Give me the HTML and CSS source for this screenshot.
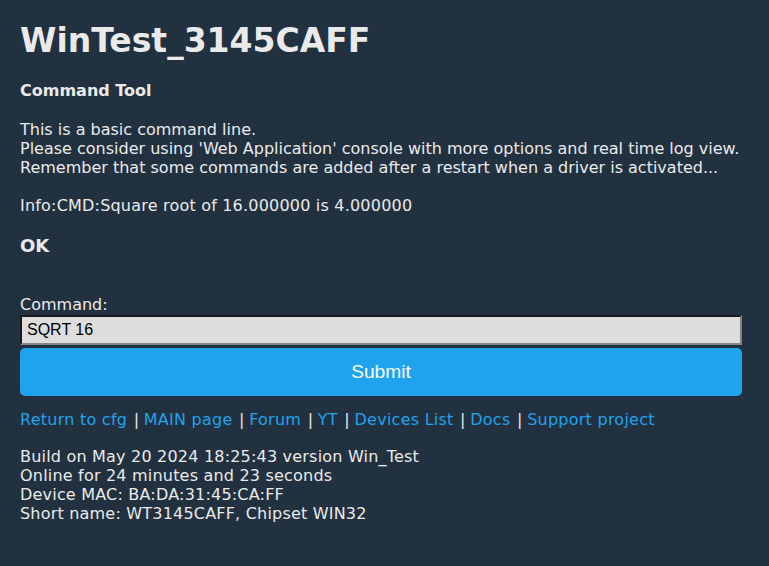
FILE: index.html
```html
<!DOCTYPE html>
<html>
<head>
<meta charset="utf-8">
<title>WinTest_3145CAFF</title>
<link rel="stylesheet" href="styles.css">
</head>
<body>
<div class="page">
  <h1 class="title">WinTest_3145CAFF</h1>
  <h4 class="subtitle">Command Tool</h4>
  <p class="intro">This is a basic command line.<br>Please consider using 'Web Application' console with more options and real time log view.<br>Remember that some commands are added after a restart when a driver is activated...</p>
  <p class="info">Info:CMD:Square root of 16.000000 is 4.000000</p>
  <h3 class="result">OK</h3>
  <form class="cmd-form">
    <label class="cmd-label" for="cmd">Command:</label>
    <input class="cmd-input" id="cmd" type="text" value="SQRT 16">
    <button class="cmd-submit" type="button">Submit</button>
  </form>
  <nav class="links"><a href="#">Return to cfg</a><span class="sep">|</span><a href="#">MAIN page</a><span class="sep">|</span><a href="#">Forum</a><span class="sep">|</span><a href="#">YT</a><span class="sep">|</span><a href="#">Devices List</a><span class="sep">|</span><a href="#">Docs</a><span class="sep">|</span><a href="#">Support project</a></nav>
  <div class="build">Build on May 20 2024 18:25:43 version Win_Test<br>Online for 24 minutes and 23 seconds<br>Device MAC: BA:DA:31:45:CA:FF<br>Short name: WT3145CAFF, Chipset WIN32</div>
</div>
</body>
</html>
```
FILE: styles.css
```css
html, body {
  margin: 0;
  padding: 0;
  background: #223140;
  height: 100%;
}
body {
  color: #eaeaea;
  font-family: "DejaVu Sans", Verdana, sans-serif;
  font-size: 16px;
  line-height: 19px;
}
.page {
  width: 722px;
  padding: 22px 0 0 20px;
}
.title {
  margin: 0;
  font-size: 33px;
  line-height: 38px;
  font-weight: bold;
}
.subtitle {
  margin: 21px 0 0;
  font-size: 16px;
  font-weight: bold;
}
.intro {
  margin: 20px 0 0;
}
.info {
  margin: 19px 0 0;
  letter-spacing: 0.2px;
}
.result {
  margin: 20px 0 0;
  font-size: 18px;
  line-height: 22px;
  font-weight: bold;
}
.cmd-form {
  margin: 38px 0 0;
  display: flex;
  flex-direction: column;
}
.cmd-label {
  display: block;
}
.cmd-input {
  margin: 1px 0 0;
  width: 100%;
  height: 30px;
  box-sizing: border-box;
  padding: 0 5px;
  background: #dddddd;
  color: #000;
  font-family: "Liberation Sans", Arial, sans-serif;
  font-size: 16px;
  border-width: 2px;
  border-style: solid;
  border-color: #1a1a1a #858585 #858585 #1a1a1a;
  outline: none;
}
.cmd-submit {
  margin: 3px 0 0;
  width: 100%;
  height: 48px;
  border: 0;
  border-radius: 5px;
  background: #1fa3ec;
  color: #fff;
  font-family: "Liberation Sans", Arial, sans-serif;
  font-size: 19.2px;
  padding: 0;
}
.links {
  margin: 14px 0 0;
  letter-spacing: 0.25px;
}
.links a {
  color: #1fa3ec;
  text-decoration: none;
}
.sep {
  margin: 0 4.5px 0 6.5px;
}
.build {
  margin: 18px 0 0;
  letter-spacing: 0.2px;
}
```
